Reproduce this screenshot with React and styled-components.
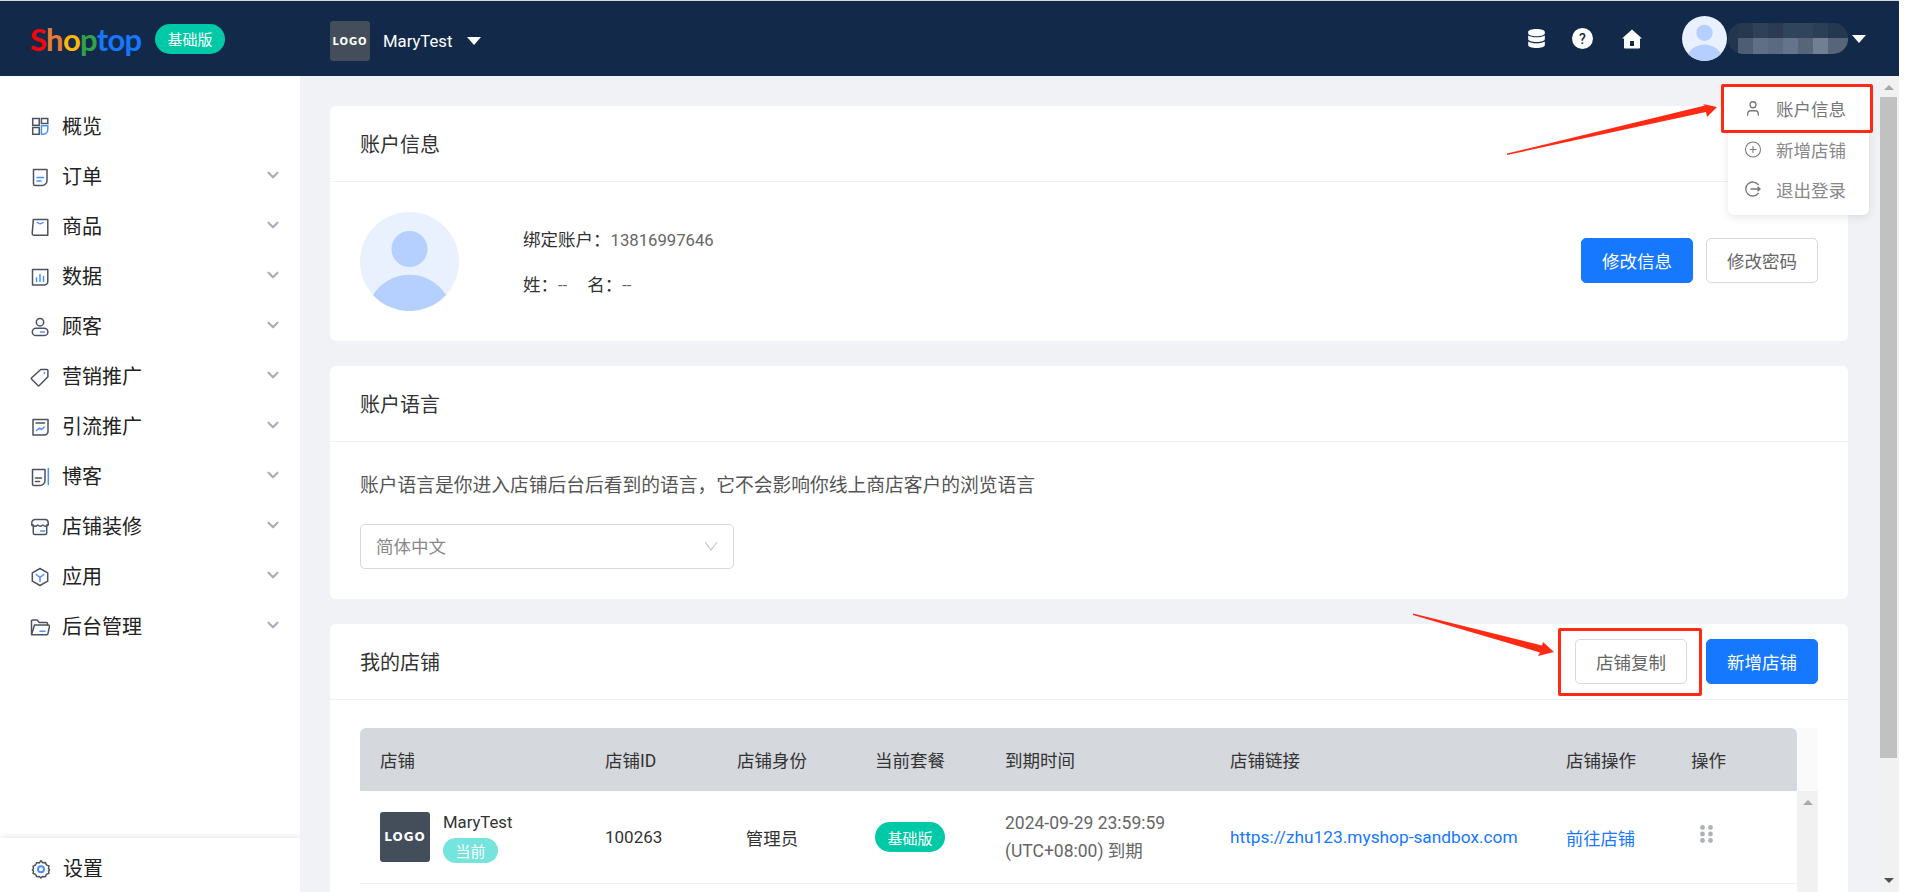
import styled, { createGlobalStyle } from "styled-components";
import { ChevronDown, CirclePlus, User } from "lucide-react";
import { FaDatabase } from "react-icons/fa";

const DARK = "#4b5361";
const BLUE = "#4a90ff";

const menu = [
  { label: "概览", icon: "overview", noArrow: true },
  { label: "订单", icon: "order" },
  { label: "商品", icon: "product" },
  { label: "数据", icon: "data" },
  { label: "顾客", icon: "customer" },
  { label: "营销推广", icon: "tag" },
  { label: "引流推广", icon: "traffic" },
  { label: "博客", icon: "blog" },
  { label: "店铺装修", icon: "store" },
  { label: "应用", icon: "app" },
  { label: "后台管理", icon: "folder" },
];

const tableHead = ["店铺", "店铺ID", "店铺身份", "当前套餐", "到期时间", "店铺链接", "店铺操作", "操作"];

const mosaicTop = ["#27384f", "#2e4159", "#2a3b52", "#30445c", "#30445c", "#2c3f57", "#253850", "#253850"];
const mosaicBottom = ["#4d5e72", "#5f6f85", "#5a6a80", "#64748a", "#566678", "#717f92", "#56657a", "#56657a"];

function MenuIcon({ name }) {
  const line = { fill: "none", stroke: DARK, strokeWidth: 1.5, strokeLinejoin: "round", strokeLinecap: "round" };
  const accent = { fill: "none", stroke: BLUE, strokeWidth: 1.5, strokeLinecap: "round", strokeLinejoin: "round" };
  return (
    <IconSvg viewBox="0 0 20 20">
      {name === "overview" && (
        <>
          <rect x="2.7" y="1.5" width="6.5" height="6.8" {...line} strokeLinejoin="miter" />
          <rect x="11.4" y="1.5" width="6.4" height="5" {...line} strokeLinejoin="miter" />
          <rect x="2.7" y="10.5" width="6.5" height="6.8" {...line} strokeLinejoin="miter" />
          <path d="M11.4 8.8h6.4v3.7a4.8 4.8 0 0 1-4.8 4.8h-1.6z" {...accent} />
        </>
      )}
      {name === "order" && (
        <>
          <path d="M3.5 2.5h13.5v11a5 5 0 0 1-5 5H5a1.5 1.5 0 0 1-1.5-1.5z" {...line} />
          <path d="M7 10.5h6.5M7 14h4" {...accent} />
        </>
      )}
      {name === "product" && (
        <>
          <path d="M3.3 2.5h14a.5.5 0 0 1 .5.5v15.2H3.8a1.6 1.6 0 0 1-1.6-1.6z" {...line} />
          <path d="M7.5 5.5c1.5 1.3 4 1.3 5.5 0" {...accent} />
        </>
      )}
      {name === "data" && (
        <>
          <path d="M2.5 2.5h15.3v12a3.5 3.5 0 0 1-3.5 3.5H2.5z" {...line} />
          <path d="M6.5 11v3.5M10 7.5v7M13.5 9.5v5" {...accent} />
        </>
      )}
      {name === "customer" && (
        <>
          <circle cx="10" cy="5.2" r="3.7" {...line} />
          <rect x="2.3" y="11.2" width="15.6" height="7.4" rx="3.7" {...line} />
          <path d="M10.5 15h4" {...accent} />
        </>
      )}
      {name === "tag" && (
        <>
          <path d="M10.7 2.5h6.2a1 1 0 0 1 1 1v6.3L9.3 18.5a1 1 0 0 1-1.4 0L1.7 12.2a1 1 0 0 1 0-1.4z" {...line} />
          <circle cx="14.4" cy="6" r="1" fill={BLUE} />
        </>
      )}
      {name === "traffic" && (
        <>
          <path d="M3 2.5h15v12a3.5 3.5 0 0 1-3.5 3.5H3z" {...line} />
          <path d="M6 6h8.5" {...line} />
          <path d="M6.5 13.5l3-2.3 2 1.2 2.8-2.4" {...accent} />
        </>
      )}
      {name === "blog" && (
        <>
          <path d="M2.5 2.5h12.5v11a5 5 0 0 1-5 5H3.8a1.3 1.3 0 0 1-1.3-1.3z" {...line} />
          <path d="M5.5 11h6M5.5 14.5h4" {...line} />
          <path d="M18.3 1.5v16" {...accent} />
        </>
      )}
      {name === "store" && (
        <>
          <path d="M5 2.5h10a3.2 3.2 0 0 1 3.2 3.2v2.3h-1.5v8a1.5 1.5 0 0 1-1.5 1.5H4.8a1.5 1.5 0 0 1-1.5-1.5V8H1.8V5.7A3.2 3.2 0 0 1 5 2.5z" {...line} />
          <path d="M1.8 8c2 1.7 4.2 1.7 6 0 1.6 1.5 3.4 1.5 5 0 1.4 1.3 3.6 1.6 5.4 0" {...line} />
          <path d="M10.5 14h4" {...accent} />
        </>
      )}
      {name === "app" && (
        <>
          <path d="M10 1.5l7.7 4.3v8.4L10 18.5l-7.7-4.3V5.8z" {...line} />
          <path d="M6.2 7.5L10 10.3l3.8-2.8M10 10.3v4.2" {...accent} />
        </>
      )}
      {name === "folder" && (
        <>
          <path d="M1.5 16.8V4a1 1 0 0 1 1-1h4.7l2 2.5h7.3a1 1 0 0 1 1 1V8" {...line} />
          <path d="M4.5 8h14a1 1 0 0 1 1 1.2l-1.6 7.6a1 1 0 0 1-1 .9H1.5z" {...line} />
          <path d="M10 14.2h5" {...accent} />
        </>
      )}
      {name === "setting" && (
        <>
          <path d="M10 1.6l1.6 2.2 2.7-.4 1.1 2.5 2.5 1.1-.4 2.7 1.1 1-1.1 1.5.4 2.1-2.5 1.1-1.1 2.3-2.7-.3L10 19l-1.6-1.5-2.7.3-1.1-2.3-2.5-1.1.4-2.1-1.1-1.5 1.1-1-.4-2.7 2.5-1.1 1.1-2.5 2.7.4z" {...line} />
          <circle cx="10" cy="10.3" r="3" fill="none" stroke={BLUE} strokeWidth="2" />
        </>
      )}
    </IconSvg>
  );
}

function AvatarPic({ size }) {
  return (
    <svg width={size} height={size} viewBox="0 0 99 99">
      <circle cx="49.5" cy="49.5" r="49.5" fill="#e9f0fe" />
      <circle cx="49.5" cy="37" r="18" fill="#b5d0ff" />
      <path d="M13 83a43 43 0 0 1 73 0A49.5 49.5 0 0 1 13 83z" fill="#b5d0ff" />
    </svg>
  );
}

function BlurredName() {
  return (
    <MosaicSvg viewBox="0 0 120 31">
      <defs>
        <clipPath id="nameClip">
          <rect width="120" height="31" rx="15" />
        </clipPath>
      </defs>
      <g clipPath="url(#nameClip)">
        <rect width="120" height="31" fill="#22364f" />
        {mosaicTop.map((c, i) => (
          <rect key={i} x={10 + i * 15} y="0" width="15" height="15" fill={c} />
        ))}
        {mosaicBottom.map((c, i) => (
          <rect key={i} x={10 + i * 15} y="15" width="15" height="16" fill={c} />
        ))}
      </g>
    </MosaicSvg>
  );
}

function App() {
  return (
    <Page>
      <GlobalStyle />
      <Header>
        <Brand>
          <Logo>
            <LogoLetter $color="#f5060c">S</LogoLetter>
            <LogoLetter $color="#e87d35">h</LogoLetter>
            <LogoLetter $color="#fdb80f">o</LogoLetter>
            <LogoLetter $color="#2ea34a">p</LogoLetter>
            <LogoLetter $color="#1677ff">top</LogoLetter>
          </Logo>
          <PlanBadge>基础版</PlanBadge>
        </Brand>
        <ShopSwitch>
          <LogoBox $size={40}>LOGO</LogoBox>
          <ShopName>MaryTest</ShopName>
          <Caret />
        </ShopSwitch>
        <HeaderRight>
          <FaDatabase size={19} color="#fff" />
          <svg width="21" height="21" viewBox="0 0 21 21">
            <circle cx="10.5" cy="10.5" r="10.5" fill="#fff" />
            <HelpMark x="10.5" y="15.5" textAnchor="middle">?</HelpMark>
          </svg>
          <HomeSvg viewBox="0 0 20 20">
            <path d="M10 0.5L20 9.5h-2v9a1 1 0 0 1-1 1H3a1 1 0 0 1-1-1v-9H0z" fill="#fff" />
            <rect x="8" y="12" width="4" height="5" fill="#13294a" />
          </HomeSvg>
          <HeaderAvatar>
            <AvatarPic size={45} />
          </HeaderAvatar>
          <BlurredName />
          <UserCaret />
        </HeaderRight>
      </Header>

      <Body>
        <Sidebar>
          <Menu>
            {menu.map((item) => (
              <MenuRow key={item.label}>
                <MenuIcon name={item.icon} />
                <MenuLabel>{item.label}</MenuLabel>
                {!item.noArrow && <MenuArrow size={18} strokeWidth={3} />}
              </MenuRow>
            ))}
          </Menu>
          <SidebarFooter>
            <MenuIcon name="setting" />
            <MenuLabel>设置</MenuLabel>
          </SidebarFooter>
        </Sidebar>

        <Main>
          <Content>
            <Card>
              <CardHeader>
                <CardTitle>账户信息</CardTitle>
              </CardHeader>
              <AccountBody>
                <AvatarPic size={99} />
                <AccountInfo>
                  <InfoLine>
                    绑定账户：<InfoValue>13816997646</InfoValue>
                  </InfoLine>
                  <NameLine>
                    <span>姓：<InfoValue>--</InfoValue></span>
                    <span>名：<InfoValue>--</InfoValue></span>
                  </NameLine>
                </AccountInfo>
                <ButtonRow>
                  <PrimaryButton>修改信息</PrimaryButton>
                  <GhostButton>修改密码</GhostButton>
                </ButtonRow>
              </AccountBody>
            </Card>

            <Card>
              <CardHeader>
                <CardTitle>账户语言</CardTitle>
              </CardHeader>
              <LanguageBody>
                <Description>账户语言是你进入店铺后台后看到的语言，它不会影响你线上商店客户的浏览语言</Description>
                <SelectBox>
                  简体中文
                  <svg width="14" height="10" viewBox="0 0 14 10">
                    <path d="M1 1l6 8 6-8" fill="none" stroke="#c4c4c4" strokeWidth="1.1" />
                  </svg>
                </SelectBox>
              </LanguageBody>
            </Card>

            <Card>
              <CardHeader>
                <CardTitle>我的店铺</CardTitle>
                <ShopButtons>
                  <GhostButton>店铺复制</GhostButton>
                  <PrimaryButton>新增店铺</PrimaryButton>
                </ShopButtons>
              </CardHeader>
              <TableWrap>
                <HeadRow>
                  <TableHead>
                    {tableHead.map((h) => (
                      <span key={h}>{h}</span>
                    ))}
                  </TableHead>
                  <HeadGutter />
                </HeadRow>
                <TableBody>
                  <TableRow>
                    <StoreCell>
                      <LogoBox $size={50}>LOGO</LogoBox>
                      <StoreMeta>
                        <StoreName>MaryTest</StoreName>
                        <CurrentBadge>当前</CurrentBadge>
                      </StoreMeta>
                    </StoreCell>
                    <IdCell>100263</IdCell>
                    <RoleCell>管理员</RoleCell>
                    <PlanBadge>基础版</PlanBadge>
                    <DateCell>
                      <div>2024-09-29 23:59:59</div>
                      <div>(UTC+08:00) 到期</div>
                    </DateCell>
                    <TableLink>https://zhu123.myshop-sandbox.com</TableLink>
                    <TableLink>前往店铺</TableLink>
                    <DotsSvg viewBox="0 0 13 18">
                      {[2.5, 9, 15.5].map((y) =>
                        [2.5, 10.5].map((x) => <circle key={`${x}-${y}`} cx={x} cy={y} r="2.4" fill="#aeb2b8" />)
                      )}
                    </DotsSvg>
                  </TableRow>
                  <InnerRail>
                    <RailUp $color="#a8a8a8" />
                  </InnerRail>
                </TableBody>
              </TableWrap>
            </Card>
          </Content>

          <Rail>
            <RailUp $color="#a8a8a8" />
            <RailThumb />
            <RailDown $color="#505050" />
          </Rail>
        </Main>
      </Body>

      <UserPopup>
        <AccountHighlight>
          <HighlightItem>
            <PopupIcon>
              <User size={21} strokeWidth={1.7} />
            </PopupIcon>
            账户信息
          </HighlightItem>
        </AccountHighlight>
        <PopupItem>
          <PopupIcon>
            <CirclePlus size={19} strokeWidth={1.4} />
          </PopupIcon>
          新增店铺
        </PopupItem>
        <PopupItem>
          <PopupIcon>
            <svg width="18" height="18" viewBox="0 0 18 18" fill="none" stroke="currentColor" strokeWidth="1.3">
              <path d="M14.6 5.2A7 7 0 1 0 14.6 12.8" />
              <path d="M6.5 9h9.5M13.5 6.8L16 9l-2.5 2.2" />
            </svg>
          </PopupIcon>
          退出登录
        </PopupItem>
      </UserPopup>

      <CopyHighlight />

      <ArrowLayer viewBox="0 0 1899 892">
        <polygon points="1507,153.5 1705,105.5 1703,104 1717,107 1707,117 1706,112 1507,155" fill="#ff2a14" />
        <polygon points="1413,613.5 1542,645.5 1543,642 1554,652 1538,656 1540,652.5 1413,615" fill="#ff2a14" />
      </ArrowLayer>
    </Page>
  );
}

export default App;

const GlobalStyle = createGlobalStyle`
  html, body {
    margin: 0;
    background: #fff;
  }
  * {
    box-sizing: border-box;
  }
  body {
    font-family: Roboto, "Noto Sans CJK SC", sans-serif;
    font-size: 17.5px;
    color: #333;
  }
`;

const Page = styled.div`
  position: relative;
  width: 1899px;
  height: 892px;
  display: flex;
  flex-direction: column;
  overflow: hidden;
  border-top: 1px solid #d9d9d9;
`;

const Header = styled.header`
  flex: 0 0 75px;
  display: flex;
  align-items: center;
  padding: 0 33px 0 30px;
  background: #13294a;
  color: #fff;
`;

const Brand = styled.div`
  width: 300px;
  display: flex;
  align-items: center;
  gap: 12px;
`;

const Logo = styled.div`
  width: 113px;
  font-family: Lato, sans-serif;
  font-size: 31px;
  font-weight: 700;
  letter-spacing: -0.7px;
  line-height: 36px;
  white-space: nowrap;
`;

const LogoLetter = styled.span`
  color: ${(p) => p.$color};
`;

const PlanBadge = styled.span`
  width: 70px;
  height: 30px;
  display: flex;
  align-items: center;
  justify-content: center;
  border-radius: 15px;
  background: #00c9a7;
  color: #fff;
  font-size: 15px;
`;

const ShopSwitch = styled.div`
  display: flex;
  align-items: center;
  margin-top: 5px;
`;

const LogoBox = styled.div`
  flex: none;
  width: ${(p) => p.$size}px;
  height: ${(p) => p.$size}px;
  display: flex;
  align-items: center;
  justify-content: center;
  border-radius: 3px;
  background: #434e5a;
  color: #fff;
  font-family: "DejaVu Sans", sans-serif;
  font-weight: 700;
  font-size: ${(p) => (p.$size > 45 ? 12 : 10)}px;
  letter-spacing: 1px;
`;

const ShopName = styled.span`
  margin-left: 13px;
  font-size: 16.7px;
`;

const Caret = styled.span`
  margin-left: 15px;
  border-left: 7px solid transparent;
  border-right: 7px solid transparent;
  border-top: 8px solid #fff;
`;

const HeaderRight = styled.div`
  margin-left: auto;
  display: flex;
  align-items: center;
  gap: 26px;
`;

const HelpMark = styled.text`
  font-family: Roboto, sans-serif;
  font-size: 14px;
  font-weight: 500;
  fill: #13294a;
`;

const HomeSvg = styled.svg`
  width: 20px;
  height: 20px;
  margin-left: 3px;
`;

const HeaderAvatar = styled.div`
  margin-left: 14px;
  display: flex;
`;

const MosaicSvg = styled.svg`
  width: 120px;
  height: 31px;
  margin-left: -25px;
`;

const UserCaret = styled(Caret)`
  margin-left: -22px;
`;

const Body = styled.div`
  flex: 1;
  display: flex;
  min-height: 0;
`;

const Sidebar = styled.aside`
  flex: 0 0 300px;
  display: flex;
  flex-direction: column;
  background: #fff;
`;

const Menu = styled.nav`
  flex: 1;
  padding-top: 26px;
`;

const MenuRow = styled.div`
  height: 50px;
  display: flex;
  align-items: center;
  padding: 0 18px 0 30px;
`;

const IconSvg = styled.svg`
  flex: none;
  width: 20px;
  height: 20px;
`;

const MenuLabel = styled.span`
  margin-left: 12px;
  font-size: 20px;
  line-height: 20px;
  color: #222;
`;

const MenuArrow = styled(ChevronDown)`
  margin-left: auto;
  margin-bottom: 4px;
  color: #a9afb8;
`;

const SidebarFooter = styled.div`
  height: 54px;
  display: flex;
  align-items: flex-start;
  padding: 21px 0 0 31px;
  box-shadow: 0 -1px 6px rgba(0, 0, 0, 0.08), 2px 0 8px rgba(0, 0, 0, 0.04);
`;

const Main = styled.main`
  flex: 1;
  display: flex;
  min-width: 0;
  background: #f0f2f5;
`;

const Content = styled.div`
  flex: 1;
  min-width: 0;
  padding: 30px 32px 0 30px;
  display: flex;
  flex-direction: column;
  gap: 25px;
`;

const Card = styled.section`
  flex: none;
  background: #fff;
  border-radius: 6px;
`;

const CardHeader = styled.div`
  height: 76px;
  display: flex;
  align-items: center;
  justify-content: space-between;
  padding: 0 30px;
  border-bottom: 1px solid #f0f0f0;
`;

const CardTitle = styled.h2`
  margin: 0;
  font-size: 20px;
  font-weight: 400;
  color: #333;
`;

const AccountBody = styled.div`
  height: 159px;
  display: flex;
  align-items: center;
  padding: 0 30px 1px;
`;

const AccountInfo = styled.div`
  margin: 4px 0 0 64px;
  display: flex;
  flex-direction: column;
  gap: 22px;
`;

const InfoLine = styled.div`
  line-height: 22px;
`;

const NameLine = styled(InfoLine)`
  display: flex;
  gap: 20px;
`;

const InfoValue = styled.span`
  color: #666;
  font-size: 16.7px;
`;

const ButtonRow = styled.div`
  margin: 0 0 1px auto;
  display: flex;
  gap: 13px;
`;

const ShopButtons = styled.div`
  display: flex;
  gap: 19px;
`;

const GhostButton = styled.button`
  height: 45px;
  padding: 0 20px;
  border: 1px solid #d9d9d9;
  border-radius: 5px;
  background: #fff;
  color: #666;
  font: inherit;
  cursor: pointer;
`;

const PrimaryButton = styled(GhostButton)`
  border-color: #1677ff;
  background: #1677ff;
  color: #fff;
`;

const LanguageBody = styled.div`
  padding: 32px 30px 30px;
`;

const Description = styled.p`
  margin: 0 0 26px;
  font-size: 18.75px;
  line-height: 24px;
  color: #555;
`;

const SelectBox = styled.div`
  width: 374px;
  height: 45px;
  display: flex;
  align-items: center;
  justify-content: space-between;
  padding: 0 15px 2px;
  border: 1px solid #d9d9d9;
  border-radius: 5px;
  color: #888;
`;

const TableWrap = styled.div`
  padding: 28px 30px 0;
`;

const HeadRow = styled.div`
  display: flex;
  height: 63px;
`;

const columns = "225px 132px 138px 130px 225px 336px 125px 106px";

const TableHead = styled.div`
  width: 1437px;
  display: grid;
  grid-template-columns: ${columns};
  align-items: center;
  padding-left: 20px;
  border-radius: 6px 6px 0 0;
  background: #d5d8dd;
  color: #333;
`;

const HeadGutter = styled.div`
  flex: 1;
  background: #fafafa;
`;

const TableBody = styled.div`
  display: flex;
`;

const TableRow = styled.div`
  width: 1437px;
  height: 93px;
  display: grid;
  grid-template-columns: ${columns};
  align-items: center;
  padding-left: 20px;
  border-bottom: 1px solid #f0f0f0;
  flex: none;
`;

const StoreCell = styled.div`
  display: flex;
  align-items: center;
  gap: 13px;
`;

const StoreMeta = styled.div`
  display: flex;
  flex-direction: column;
  align-items: flex-start;
  gap: 4px;
`;

const StoreName = styled.span`
  font-size: 16.7px;
  line-height: 22px;
`;

const IdCell = styled.span`
  font-size: 17px;
`;

const CurrentBadge = styled.span`
  width: 55px;
  height: 25px;
  display: flex;
  align-items: center;
  justify-content: center;
  border-radius: 13px;
  background: #75e4dc;
  color: #fff;
  font-size: 15px;
`;

const RoleCell = styled.span`
  width: 70px;
  text-align: center;
`;

const DateCell = styled.div`
  line-height: 28px;
  color: #666;
`;

const TableLink = styled.a`
  color: #1677ff;
  font-size: 17.3px;
`;

const DotsSvg = styled.svg`
  width: 13px;
  height: 18px;
  margin: 0 0 6px 9px;
`;

const InnerRail = styled.div`
  flex: 1;
  height: 110px;
  display: flex;
  justify-content: center;
  align-items: flex-start;
  background: #f1f1f1;
`;

const Rail = styled.div`
  flex: 0 0 19px;
  display: flex;
  flex-direction: column;
  align-items: center;
  padding-right: 2px;
  background: #f1f1f1;
`;

const RailUp = styled.span`
  margin: 9px 0 7px;
  width: 0;
  height: 0;
  border-left: 5px solid transparent;
  border-right: 5px solid transparent;
  border-bottom: 5px solid ${(p) => p.$color};
`;

const RailDown = styled.span`
  margin: auto 0 9px;
  width: 0;
  height: 0;
  border-left: 5px solid transparent;
  border-right: 5px solid transparent;
  border-top: 5px solid ${(p) => p.$color};
`;

const RailThumb = styled.div`
  width: 17px;
  height: 661px;
  background: #c1c1c1;
`;

const UserPopup = styled.div`
  position: absolute;
  left: 1728px;
  top: 89px;
  width: 141px;
  height: 125px;
  padding-top: 39px;
  border-radius: 6px;
  background: #fff;
  box-shadow: 0 2px 10px rgba(0, 0, 0, 0.1);
`;

const PopupItem = styled.div`
  height: 40px;
  display: flex;
  align-items: center;
  gap: 14px;
  padding-left: 16px;
  color: #888;
  white-space: nowrap;
`;

const HighlightItem = styled(PopupItem)`
  height: 100%;
  padding-left: 20px;
  color: #777;
`;

const PopupIcon = styled.span`
  flex: none;
  width: 18px;
  display: flex;
  justify-content: center;
  color: #777;
`;

const AccountHighlight = styled.div`
  position: absolute;
  left: -7px;
  top: -6px;
  width: 152px;
  height: 49px;
  border: 3px solid #ff2a14;
  border-radius: 2px;
  background: #fff;
`;

const CopyHighlight = styled.div`
  position: absolute;
  left: 1558px;
  top: 627px;
  width: 144px;
  height: 68px;
  border: 3px solid #ff2a14;
  border-radius: 2px;
`;

const ArrowLayer = styled.svg`
  position: absolute;
  left: 0;
  top: -1px;
  width: 1899px;
  height: 892px;
  pointer-events: none;
`;
